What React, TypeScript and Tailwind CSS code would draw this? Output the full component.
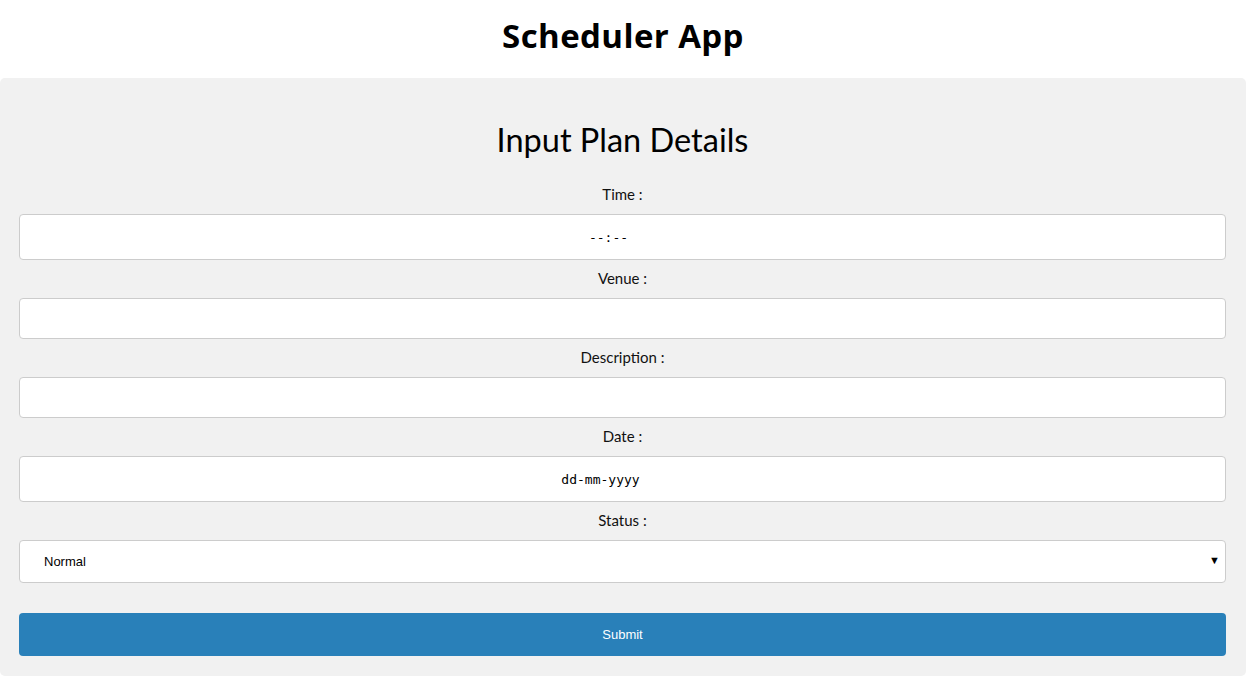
import { useState } from "react";

const label = "block text-center text-[15px] leading-[20px] text-[#111]";
const field =
  "block w-full rounded-[4px] border border-[#cccccc] bg-white outline-none";

export default function App() {
  const [status, setStatus] = useState("Normal");

  return (
    <div className="min-h-[687px] w-[1254px] bg-white font-['Lato','Open_Sans',sans-serif]">
      <header className="flex h-[78px] w-[1246px] items-center justify-center pb-[6px]">
        <h1 className="font-['Open_Sans',sans-serif] text-[33px] font-bold tracking-[0.4px] text-black">
          Scheduler App
        </h1>
      </header>

      <form
        className="w-[1246px] rounded-[5px] bg-[#f1f1f1] pl-[19px] pr-[20px] pt-[43px] pb-[20px]"
        onSubmit={(e) => e.preventDefault()}
      >
        <h2 className="text-center text-[32.5px] leading-[38px] text-black">Input Plan Details</h2>

        <label className={`${label} mt-[25px] mb-[10px]`}>Time :</label>
        <input
          readOnly
          placeholder="--:--"
          className={`${field} h-[46px] pr-[28px] text-center font-['DejaVu_Sans_Mono',monospace] text-[13px] placeholder:text-black`}
        />

        <label className={`${label} mt-[8px] mb-[10px]`}>Venue :</label>
        <input className={`${field} h-[41px] px-3 text-[14px]`} />

        <label className={`${label} mt-[8px] mb-[10px]`}>Description :</label>
        <input className={`${field} h-[41px] px-3 text-[14px]`} />

        <label className={`${label} mt-[8px] mb-[10px]`}>Date :</label>
        <input
          readOnly
          placeholder="dd-mm-yyyy"
          className={`${field} h-[46px] pr-[44px] text-center font-['DejaVu_Sans_Mono',monospace] text-[13px] placeholder:text-black`}
        />

        <label className={`${label} mt-[8px] mb-[10px]`}>Status :</label>
        <div className="relative">
          <select
            value={status}
            onChange={(e) => setStatus(e.target.value)}
            className={`${field} h-[43px] appearance-none pl-[24px] font-['Liberation_Sans',Arial,sans-serif] text-[13px] text-black`}
          >
            <option>Normal</option>
            <option>Urgent</option>
          </select>
          <span className="pointer-events-none absolute right-[6px] top-[12px] text-[11px] text-black">▼</span>
        </div>

        <button
          type="submit"
          className="mt-[30px] block h-[43px] w-full rounded-[4px] bg-[#2980b9] font-['Liberation_Sans',Arial,sans-serif] text-[13px] text-white"
        >
          Submit
        </button>
      </form>
    </div>
  );
}
